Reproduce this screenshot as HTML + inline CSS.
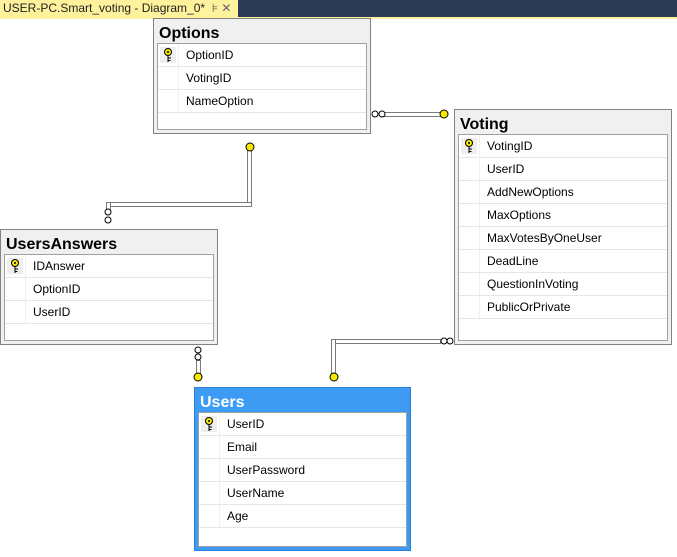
<!DOCTYPE html><html><head><style>
body{margin:0;width:677px;height:557px;background:#fff;position:relative;overflow:hidden;font-family:"Liberation Sans",sans-serif}
.tab{position:absolute;left:0;top:0;width:677px;height:17px;background:#2b3a55}
.tab .t{position:absolute;left:0;top:0;height:17px;width:238px;background:#fff29d;font-size:12px;line-height:16px;padding-left:3px;color:#1e1e1e;box-sizing:border-box}
.strip{position:absolute;left:0;top:17px;width:677px;height:2px;background:#fff29d}
.tbl{position:absolute;background:#f0f0f0;border:1px solid #828282;box-sizing:border-box}
.tbl h{position:absolute;left:5px;top:6px;font-weight:bold;font-size:16px;color:#000}
.grid{position:absolute;left:3px;right:3px;top:24px;bottom:3px;background:#fff;border:1px solid #a0a0a0}
.row{height:22px;border-bottom:1px solid #e6e6e6;position:relative;font-size:12px;line-height:22px}
.row .k{position:absolute;left:0;top:0;width:20px;height:22px;border-right:1px solid #f0f0f0}
.row span{position:absolute;left:28px}
.key{position:absolute;left:2px;top:3px;width:16px;height:16px;background:#eee}
.blue{background:#3d9bf3;border-color:#2a7fd6}
.blue h{color:#fff}
.ln{position:absolute;background:#fff;border:1px solid #7a7a7a;box-sizing:border-box}
</style></head><body>
<div class="tab"><div class="t">USER-PC.Smart_voting - Diagram_0* &nbsp;<span style="color:#666">⊧ ✕</span></div></div>
<div class="strip"></div>
<div class="ln" style="left:380px;top:112px;width:62px;height:5px"></div>
<div class="ln" style="left:247px;top:150px;width:5px;height:57px"></div>
<div class="ln" style="left:106px;top:202px;width:146px;height:5px"></div>
<div class="ln" style="left:106px;top:202px;width:5px;height:12px"></div>
<div class="ln" style="left:196px;top:360px;width:5px;height:15px"></div>
<div class="ln" style="left:331px;top:339px;width:110px;height:5px"></div>
<div class="ln" style="left:331px;top:339px;width:5px;height:36px"></div>
<svg width="677" height="557" style="position:absolute;left:0;top:0">
<defs><g id="k"><circle cx="0" cy="0" r="3.5" fill="#f5e800" stroke="#000"/><circle cx="0" cy="0" r="1" fill="#000"/><path d="M0 3.5V10M0 6H3M0 8.5H2.5" stroke="#000" fill="none"/></g></defs>
<g fill="#fff" stroke="#000"><circle cx="375" cy="114" r="3"/><circle cx="382" cy="114" r="3"/>
<circle cx="108" cy="212" r="3"/><circle cx="108" cy="220" r="3"/>
<circle cx="198" cy="350" r="3"/><circle cx="198" cy="357" r="3"/>
<circle cx="444" cy="341" r="3"/><circle cx="450" cy="341" r="3"/></g>
<g fill="#f5e800" stroke="#000"><circle cx="444" cy="114" r="4"/><circle cx="250" cy="147" r="4"/><circle cx="198" cy="377" r="4"/><circle cx="334" cy="377" r="4"/></g>
</svg>
<div class="tbl" style="left:153px;top:18px;width:218px;height:116px"><h>Options</h><div class="grid">
<div class="row"><div class="k"><svg class="key" viewBox="-8 -5 16 16"><use href="#k"/></svg></div><span>OptionID</span></div>
<div class="row"><div class="k"></div><span>VotingID</span></div>
<div class="row"><div class="k"></div><span>NameOption</span></div></div></div>
<div class="tbl" style="left:454px;top:109px;width:218px;height:236px"><h>Voting</h><div class="grid">
<div class="row"><div class="k"><svg class="key" viewBox="-8 -5 16 16"><use href="#k"/></svg></div><span>VotingID</span></div>
<div class="row"><div class="k"></div><span>UserID</span></div>
<div class="row"><div class="k"></div><span>AddNewOptions</span></div>
<div class="row"><div class="k"></div><span>MaxOptions</span></div>
<div class="row"><div class="k"></div><span>MaxVotesByOneUser</span></div>
<div class="row"><div class="k"></div><span>DeadLine</span></div>
<div class="row"><div class="k"></div><span>QuestionInVoting</span></div>
<div class="row"><div class="k"></div><span>PublicOrPrivate</span></div></div></div>
<div class="tbl" style="left:0px;top:229px;width:218px;height:116px"><h>UsersAnswers</h><div class="grid">
<div class="row"><div class="k"><svg class="key" viewBox="-8 -5 16 16"><use href="#k"/></svg></div><span>IDAnswer</span></div>
<div class="row"><div class="k"></div><span>OptionID</span></div>
<div class="row"><div class="k"></div><span>UserID</span></div></div></div>
<div class="tbl blue" style="left:194px;top:387px;width:217px;height:164px"><h>Users</h><div class="grid">
<div class="row"><div class="k"><svg class="key" viewBox="-8 -5 16 16"><use href="#k"/></svg></div><span>UserID</span></div>
<div class="row"><div class="k"></div><span>Email</span></div>
<div class="row"><div class="k"></div><span>UserPassword</span></div>
<div class="row"><div class="k"></div><span>UserName</span></div>
<div class="row"><div class="k"></div><span>Age</span></div></div></div>
</body></html>
